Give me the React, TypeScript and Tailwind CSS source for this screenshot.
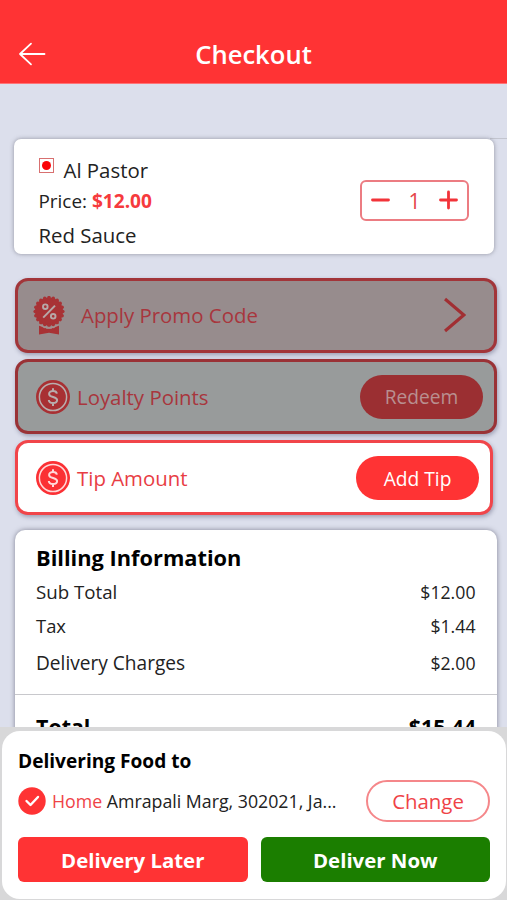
import React from "react";

function CoinIcon({ ring, gap }: { ring: string; gap: string }) {
  return (
    <svg width="34" height="34" viewBox="0 0 34 34" fill="none" className="shrink-0">
      <circle cx="17" cy="17" r="17" fill={ring} />
      <circle cx="17" cy="17" r="13.6" stroke={gap} strokeWidth="1.5" />
      <path
        d="M20.9 13.6c-.3-1.6-1.8-2.6-3.9-2.6-2.2 0-3.9 1-3.9 2.9 0 4 8 2.1 8 6.1 0 1.9-1.8 3-4.1 3-2.2 0-4-1-4.2-3M17 8.2v2.8M17 23v2.9"
        stroke={gap}
        strokeWidth="2"
      />
    </svg>
  );
}

function BadgeIcon() {
  const teeth = Array.from({ length: 20 }, (_, i) => {
    const a = (i * Math.PI) / 10;
    return { x: 16 + 13.8 * Math.cos(a), y: 15.5 + 13.8 * Math.sin(a) };
  });
  return (
    <svg width="32" height="39" viewBox="0 0 32 39" fill="none" className="shrink-0">
      <path d="M6 29.5 10.5 31l5.5 2 5.5-2 4.5-1.5V38.5L16 36.8 6 38.5Z" fill="#a83235" />
      <circle cx="16" cy="15.5" r="14" fill="#a83235" />
      {teeth.map((t, i) => (
        <circle key={i} cx={t.x} cy={t.y} r="1.8" fill="#a83235" />
      ))}
      <path d="M6.5 29 9.5 30q1.8 2 3.2 1.1 1.8 1.7 3.3.4 1.5 1.3 3.3-.4 1.4.9 3.2-1.1l3-1" stroke="#a4908f" strokeWidth="1.5" />
      <circle cx="12.3" cy="10.7" r="2.3" stroke="#b7a8a8" strokeWidth="1.9" />
      <circle cx="20.2" cy="20.3" r="2.3" stroke="#b7a8a8" strokeWidth="1.9" />
      <path d="m22 9.6-11.8 12" stroke="#b7a8a8" strokeWidth="2" />
    </svg>
  );
}

function BillRow({ label, value, className }: { label: string; value: string; className: string }) {
  return (
    <div className={`flex items-center justify-between pr-[21.5px] pl-[21px] text-[#222] ${className}`}>
      <span>{label}</span>
      <span className="text-[17.7px]">{value}</span>
    </div>
  );
}

export default function App() {
  return (
    <div className="flex h-[900px] w-[507px] flex-col overflow-hidden bg-[#dcdfec] font-['Open_Sans','Noto_Sans',sans-serif] whitespace-nowrap">
      <header className="grid h-[84px] shrink-0 grid-cols-[60px_1fr_60px] items-end border-b border-[#ff7478] bg-[#ff3334] text-white">
        <svg width="28" height="24" viewBox="0 0 28 24" fill="none" className="mb-[17px] ml-[18px]">
          <path d="M26.5 12H2M13 1.7 2 12l11 10.3" stroke="white" strokeWidth="1.8" strokeLinecap="round" strokeLinejoin="round" />
        </svg>
        <h1 className="mb-[11px] text-center text-[25.6px] leading-[34px] font-semibold">Checkout</h1>
      </header>

      <main className="flex h-[643px] shrink-0 flex-col overflow-hidden">
        <div className="h-[55px] shrink-0 bg-[linear-gradient(#c3c5cf,#c3c5cf)] bg-[length:17px_1px] bg-right-bottom bg-no-repeat" />
        <section className="ml-3.5 flex h-[115px] w-[480px] shrink-0 items-start justify-between rounded-[7px] bg-white shadow-[0_0_4px_rgba(80,80,95,0.55)]">
          <div className="pl-[24.5px] text-[20.4px] text-[#222]">
            <div className="flex h-[30px] items-start pt-[17px]">
              <span className="mt-[2px] flex size-[15px] shrink-0 items-center justify-center border border-[#d87070]">
                <span className="size-[9px] rounded-full bg-[#fa0508]" />
              </span>
              <span className="ml-[10px] leading-7">Al Pastor</span>
            </div>
            <p className="mt-[18px] text-[18.9px] leading-7">
              Price: <b className="text-[19.1px] text-[#f63a3d]">$12.00</b>
            </p>
            <p className="mt-[6px] leading-7">Red Sauce</p>
          </div>
          <div className="mt-[41px] mr-[25px] flex h-[41px] w-[109px] items-center justify-between rounded-[6px] border-2 border-[#ec7c82] px-[9px]">
            <svg width="19" height="20" viewBox="0 0 19 20" className="relative -top-px">
              <path d="M1.5 10h16" stroke="#f23339" strokeWidth="2.8" strokeLinecap="round" />
            </svg>
            <span className="relative top-px text-[21px] text-[#e5444a]">1</span>
            <svg width="19" height="20" viewBox="0 0 19 20" className="relative -top-px">
              <path d="M1.5 10h16M9.5 2v16" stroke="#f23339" strokeWidth="2.8" strokeLinecap="round" />
            </svg>
          </div>
        </section>

        <section className="mt-6 ml-[15px] flex h-[75px] w-[482px] shrink-0 items-center rounded-[13px] border-3 border-[#a23539] bg-[#978c8d] pl-[15px] text-[#a8363d] shadow-[1px_2px_4px_rgba(80,80,110,0.45)]">
          <BadgeIcon />
          <span className="ml-4 flex-1 text-[20.4px]">Apply Promo Code</span>
          <svg width="22" height="36" viewBox="0 0 22 36" fill="none" className="relative -top-px mr-7">
            <path d="m1 2 18.8 16L1 34" stroke="#a12f33" strokeWidth="3.2" />
          </svg>
        </section>

        <section className="mt-1.5 ml-[15px] flex h-[75px] w-[482px] shrink-0 items-center rounded-[13px] border-3 border-[#9a3236] bg-[#989b9b] pr-[11px] pl-[18px] text-[#a8363d] shadow-[1px_2px_4px_rgba(80,80,110,0.45)]">
          <CoinIcon ring="#a83033" gap="#b8aeae" />
          <span className="ml-[7px] flex-1 pt-px text-[20.4px]">Loyalty Points</span>
          <button className="h-11 w-[123px] rounded-full bg-[#9b2f32] pt-[2px] text-[19.2px] text-[#b98f90]">Redeem</button>
        </section>

        <section className="mt-1.5 ml-[15px] flex h-[75px] w-[478px] shrink-0 items-center rounded-[13px] border-3 border-[#f1454a] bg-white pr-[11px] pl-[18px] text-[#e83d44] shadow-[1px_2px_4px_rgba(80,80,110,0.45)]">
          <CoinIcon ring="#fb3034" gap="#ffd9d9" />
          <span className="ml-[7px] flex-1 pt-[2px] text-[20.4px]">Tip Amount</span>
          <button className="h-11 w-[123px] rounded-full bg-[#ff3334] pt-[3px] text-[19.2px] text-white">Add Tip</button>
        </section>

        <section className="mt-[15px] ml-[15px] h-60 w-[482px] shrink-0 rounded-[10px] bg-white pt-[13px] text-[19.1px] shadow-[0_0_5px_rgba(70,70,90,0.6)]">
          <h2 className="pl-[21px] text-[21.8px] leading-[30px] font-bold text-black">Billing Information</h2>
          <BillRow label="Sub Total" value="$12.00" className="mt-[5px] h-7 text-[18.7px]" />
          <BillRow label="Tax" value="$1.44" className="mt-[6px] h-7 text-[18.4px]" />
          <BillRow label="Delivery Charges" value="$2.00" className="mt-[9px] h-7" />
          <div className="mt-[17px] h-px bg-[#c8c8cc]" />
          <div className="mt-[18px] flex justify-between pr-[21px] pl-[21px] text-[21.4px] leading-[28px] font-bold text-black">
            <span>Total</span>
            <span>$15.44</span>
          </div>
        </section>
      </main>

      <footer className="flex min-h-0 flex-1 flex-col bg-[#d8d8d9] px-[1.5px] pt-[4px] pb-px">
        <div className="flex-1 rounded-[18px] bg-white pr-[15.5px] pl-[16.5px]">
          <h2 className="pt-4 text-[19.1px] leading-7 font-bold text-black">Delivering Food to</h2>
          <div className="mt-[5px] flex h-[42px] items-center">
            <svg width="28" height="28" viewBox="0 0 28 28" fill="none">
              <circle cx="14" cy="14" r="13.7" fill="#ff3334" />
              <path d="m8.5 14 4 4 7.5-8" stroke="white" strokeWidth="2.4" strokeLinecap="round" strokeLinejoin="round" />
            </svg>
            <p className="ml-[6px] flex-1 text-[17.75px] text-[#222]">
              <span className="text-[#ef4347]">Home</span> Amrapali Marg, 302021, Ja...
            </p>
            <button className="h-[42px] w-[124px] rounded-full border-2 border-[#f5878a] text-[20.4px] text-[#ef4347]">
              Change
            </button>
          </div>
          <div className="mt-[15px] flex gap-[13px] text-[20.4px] font-bold text-white">
            <button className="h-[45px] flex-1 rounded-[6px] bg-[#ff3334] pt-px">Delivery Later</button>
            <button className="h-[45px] flex-1 rounded-[6px] bg-[#1b7e00] pt-px">Deliver Now</button>
          </div>
        </div>
      </footer>
    </div>
  );
}
